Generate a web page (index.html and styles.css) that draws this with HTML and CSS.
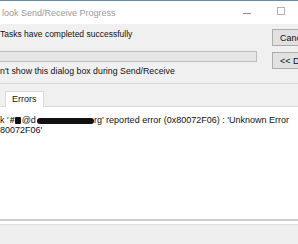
FILE: index.html
```html
<!DOCTYPE html>
<html lang="en">
<head>
  <meta charset="UTF-8" />
  <title>Send/Receive Progress</title>
  <link rel="stylesheet" href="styles.css">
</head>
<body>
  <div class="window">
    <div class="titlebar">
      <span class="title">look Send/Receive Progress</span>
      <div class="controls">
        <span class="min"></span>
        <span class="max"></span>
      </div>
    </div>

    <div class="dialog">
      <div class="top">
        <div class="status">
          <div class="msg">Tasks have completed successfully</div>
          <div class="progress"></div>
          <div class="check">n't show this dialog box during Send/Receive</div>
        </div>
        <div class="buttons">
          <button class="btn">Cancel</button>
          <button class="btn">&lt;&lt; Details</button>
        </div>
      </div>

      <div class="tabs">
        <div class="tab">Errors</div>
      </div>
      <div class="panel">
        <div class="line">k '<span class="hash">#</span><span class="blob small"></span>@d<span class="blob long"></span>rg' reported error (0x80072F06) : 'Unknown Error</div>
        <div class="line">80072F06'</div>
      </div>
    </div>

    <div class="statusbar">
      <span class="tick"></span>
    </div>
  </div>
</body>
</html>
```

FILE: styles.css
```css
body {
  margin: 0;
  width: 298px;
  height: 244px;
  overflow: hidden;
  background: #fff;
  font-family: "Liberation Sans", Arial, sans-serif;
  font-size: 9px;
  color: #111;
}

.window {
  border-top: 1px solid #6b8aa6;
}

.titlebar {
  height: 23px;
  background: #fff;
  display: flex;
  align-items: center;
  justify-content: space-between;
}

.title {
  padding-left: 2px;
  color: #9a9a9a;
  font-size: 9px;
}

.controls {
  display: flex;
  align-items: center;
  gap: 26px;
  padding-right: 13px;
}

.min {
  width: 8px;
  height: 1px;
  background: #8a8a8a;
  margin-top: 1px;
}

.max {
  width: 6px;
  height: 6px;
  border: 1px solid #b5b5b5;
  margin-top: -3px;
}

.dialog {
  background: #f0f0f0;
}

.top {
  display: flex;
  gap: 15px;
  padding-top: 5px;
  border-bottom: 1px solid #dadada;
  height: 54px;
}

.status {
  width: 257px;
  flex-shrink: 0;
}

.msg {
  font-size: 8.5px;
  line-height: 11px;
}

.progress {
  margin-top: 11px;
  height: 9px;
  background: #e6e6e6;
  border: 1px solid #bcbcbc;
  border-left: none;
}

.check {
  margin-top: 3px;
  font-size: 8.8px;
  line-height: 13px;
}

.buttons {
  display: flex;
  flex-direction: column;
  gap: 6px;
  flex-shrink: 0;
}

.btn {
  width: 60px;
  height: 17px;
  padding: 0 0 0 7px;
  text-align: left;
  background: #e1e1e1;
  border: 1px solid #adadad;
  font: inherit;
  color: #111;
}

.tabs {
  display: flex;
  padding: 7px 0 0 5px;
  border-bottom: 1px solid #d9d9d9;
}

.tab {
  width: 31px;
  height: 15px;
  line-height: 15px;
  padding-left: 6px;
  background: #fff;
  border: 1px solid #d9d9d9;
  border-bottom: none;
  margin-bottom: -1px;
}

.panel {
  background: #fff;
  height: 104px;
  padding-top: 8px;
  border-bottom: 2px solid #cdcdd2;
}

.line {
  line-height: 10px;
}

.hash {
  font-weight: bold;
  margin-left: 1px;
}

.blob {
  display: inline-block;
  background: #111;
  vertical-align: -1px;
}

.blob.small {
  width: 6px;
  height: 7px;
  border-radius: 1px;
  margin-right: 1px;
}

.blob.long {
  width: 57px;
  height: 6px;
  border-radius: 3px;
  margin-left: 1px;
}

.statusbar {
  position: relative;
  margin-top: 3px;
  height: 26px;
  background: #efefef;
  border-top: 1px solid #dedede;
  border-bottom: 1px solid #a8a8a8;
}

.tick {
  position: absolute;
  left: 128px;
  bottom: 0;
  width: 1px;
  height: 2px;
  background: #555;
}
```
